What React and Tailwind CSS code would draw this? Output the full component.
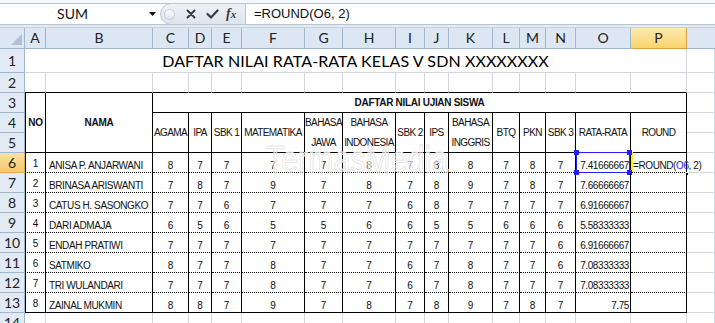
import React from 'react';

const letters = ['A', 'B', 'C', 'D', 'E', 'F', 'G', 'H', 'I', 'J', 'K', 'L', 'M', 'N', 'O', 'P'];

const siswa = [
  { no: 1, nama: 'ANISA P. ANJARWANI', nilai: [8, 7, 7, 7, 7, 8, 7, 8, 8, 7, 8, 7], rata: '7.41666667' },
  { no: 2, nama: 'BRINASA ARISWANTI', nilai: [7, 8, 7, 9, 7, 8, 7, 8, 9, 7, 8, 7], rata: '7.66666667' },
  { no: 3, nama: 'CATUS H. SASONGKO', nilai: [7, 7, 6, 7, 7, 7, 6, 8, 7, 7, 7, 7], rata: '6.91666667' },
  { no: 4, nama: 'DARI ADMAJA', nilai: [6, 5, 6, 5, 5, 6, 6, 5, 5, 6, 6, 6], rata: '5.58333333' },
  { no: 5, nama: 'ENDAH PRATIWI', nilai: [7, 7, 7, 7, 7, 7, 7, 7, 7, 7, 7, 6], rata: '6.91666667' },
  { no: 6, nama: 'SATMIKO', nilai: [8, 7, 7, 8, 7, 7, 6, 7, 8, 7, 7, 6], rata: '7.08333333' },
  { no: 7, nama: 'TRI WULANDARI', nilai: [7, 7, 7, 8, 7, 7, 6, 7, 8, 7, 7, 7], rata: '7.08333333' },
  { no: 8, nama: 'ZAINAL MUKMIN', nilai: [8, 8, 7, 9, 7, 8, 7, 8, 9, 7, 8, 7], rata: '7.75' },
];

// garis bantu excel & garis tabel
const GRID = 'border-r border-b border-[#d4d8de]';
const BOX = 'border-r border-b border-black';
const DOT = 'border-r border-b border-black [border-bottom-style:dotted]';
const HDR = 'text-center align-middle font-bold tracking-[-0.3px] whitespace-nowrap';
const SUB = 'text-center align-middle tracking-[-0.6px] whitespace-nowrap';

const RowHead = ({ n, active }) => (
  <td
    className={`border-r border-b text-center align-middle text-[14px] leading-none font-['Lato',sans-serif] ${
      active
        ? 'bg-gradient-to-b from-[#fbe2a6] to-[#f5c86a] border-[#e8a840] text-[#222]'
        : 'bg-[#e2eaf5] border-[#9eb6ce] text-[#222]'
    }`}
  >
    {n}
  </td>
);

const FormulaBar = () => (
  <div className="h-[28px] flex flex-col bg-[#e6ecf4]">
    <div className="h-[3px] bg-[#f7f8fa]" />
    <div className="h-[22px] flex border-y border-[#b8c3d1] bg-white">
      <div className="w-[160px] flex items-center relative">
        <span className="w-[145px] text-center text-[14px] font-['Lato',sans-serif] text-[#111]">SUM</span>
        <svg className="absolute left-[149px] top-[8px]" width="7" height="4" viewBox="0 0 7 4">
          <path d="M0 0 L7 0 L3.5 4 Z" fill="#111" />
        </svg>
      </div>
      <div className="w-[86px] flex items-center rounded-l-full border border-[#bcc7d5] bg-gradient-to-b from-[#eef2f7] to-[#dde4ee] -my-px">
        <div className="ml-[3px] w-[11px] h-[11px] rounded-full border border-[#c5ccd6] bg-gradient-to-b from-white to-[#dfe4ea]" />
        <svg className="ml-[11px]" width="10" height="10" viewBox="0 0 10 10">
          <path d="M1.5 1.5 L8.5 8.5 M8.5 1.5 L1.5 8.5" stroke="#3c3c3c" strokeWidth="2" strokeLinecap="round" />
        </svg>
        <svg className="ml-[10px]" width="13" height="10" viewBox="0 0 13 10">
          <path d="M1.5 5 L5 8.5 L11.5 1.5" stroke="#3c3c3c" strokeWidth="2.2" fill="none" strokeLinecap="round" strokeLinejoin="round" />
        </svg>
        <span className="ml-[7px] text-[14px] italic font-bold font-['Liberation_Serif',serif] text-[#3c3c3c] leading-none">
          f<span className="text-[11px]">x</span>
        </span>
      </div>
      <div className="flex-1 flex items-center pl-[8px] text-[13px] font-['Liberation_Sans',sans-serif] text-[#111]">
        =ROUND(O6, 2)
      </div>
    </div>
    <div className="flex-1 bg-[#e4eaf2] border-b border-[#c9d3df]" />
  </div>
);

export default function App() {
  return (
    <div className="w-[715px] h-[323px] overflow-hidden bg-white relative font-['Liberation_Sans',Arial,sans-serif] text-[10px] leading-[12px] text-[#111]">
      <FormulaBar />
      <table className="w-[715px] table-fixed border-separate border-spacing-0">
        <colgroup>
          <col className="w-[25px]" />
          <col className="w-[21px]" />
          <col className="w-[107px]" />
          <col className="w-[36px]" />
          <col className="w-[23px]" />
          <col className="w-[30px]" />
          <col className="w-[63px]" />
          <col className="w-[38px]" />
          <col className="w-[53px]" />
          <col className="w-[29px]" />
          <col className="w-[24px]" />
          <col className="w-[44px]" />
          <col className="w-[27px]" />
          <col className="w-[26px]" />
          <col className="w-[30px]" />
          <col className="w-[55px]" />
          <col className="w-[56px]" />
          <col className="w-[28px]" />
        </colgroup>
        <tbody>
          {/* huruf kolom */}
          <tr className="h-[21px]">
            <td className="border-r border-b border-[#9eb6ce] bg-[#dde7f3] relative">
              <svg className="absolute left-[11px] top-[6px]" width="11" height="11" viewBox="0 0 11 11">
                <path d="M11 0 L11 11 L0 11 Z" fill="#b5c0cc" />
              </svg>
            </td>
            {letters.map((l) => (
              <td
                key={l}
                className={`border-r border-b text-center align-middle text-[14px] leading-none font-['Lato',sans-serif] text-[#222] ${
                  l === 'P'
                    ? 'bg-gradient-to-b from-[#fdeab0] to-[#f9d46a] border-[#e0a040]'
                    : 'bg-[#dde7f3] border-[#9eb6ce]'
                }`}
              >
                {l}
              </td>
            ))}
            <td className="border-b border-[#9eb6ce] bg-[#dde7f3]" />
          </tr>

          {/* judul */}
          <tr className="h-[24px]">
            <RowHead n={1} />
            <td colSpan={16} className={`${GRID} text-center align-middle text-[16px] leading-none font-['Lato',sans-serif] tracking-[0.1px] text-black whitespace-nowrap`}>
              DAFTAR NILAI RATA-RATA KELAS V SDN XXXXXXXX
            </td>
            <td className={GRID} />
          </tr>

          <tr className="h-[20px]">
            <RowHead n={2} />
            {letters.map((l) => (
              <td key={l} className="border-r border-b border-r-[#d4d8de] border-b-black" />
            ))}
            <td className={GRID} />
          </tr>

          <tr className="h-[20px]">
            <RowHead n={3} />
            <td rowSpan={3} className={`${BOX} border-l ${HDR}`}>NO</td>
            <td rowSpan={3} className={`${BOX} ${HDR}`}>NAMA</td>
            <td colSpan={14} className={`${BOX} ${HDR}`}>DAFTAR NILAI UJIAN SISWA</td>
            <td className={GRID} />
          </tr>

          <tr className="h-[20px]">
            <RowHead n={4} />
            <td rowSpan={2} className={`${BOX} ${SUB}`}>AGAMA</td>
            <td rowSpan={2} className={`${BOX} ${SUB}`}>IPA</td>
            <td rowSpan={2} className={`${BOX} ${SUB}`}>SBK 1</td>
            <td rowSpan={2} className={`${BOX} ${SUB}`}>MATEMATIKA</td>
            <td className={`border-r border-black ${SUB}`}>BAHASA</td>
            <td className={`border-r border-black ${SUB}`}>BAHASA</td>
            <td rowSpan={2} className={`${BOX} ${SUB}`}>SBK 2</td>
            <td rowSpan={2} className={`${BOX} ${SUB}`}>IPS</td>
            <td className={`border-r border-black ${SUB}`}>BAHASA</td>
            <td rowSpan={2} className={`${BOX} ${SUB}`}>BTQ</td>
            <td rowSpan={2} className={`${BOX} ${SUB}`}>PKN</td>
            <td rowSpan={2} className={`${BOX} ${SUB}`}>SBK 3</td>
            <td rowSpan={2} className={`${BOX} ${SUB}`}>RATA-RATA</td>
            <td rowSpan={2} className={`${BOX} ${SUB}`}>ROUND</td>
            <td className={GRID} />
          </tr>

          <tr className="h-[20px]">
            <RowHead n={5} />
            <td className={`${BOX} ${SUB}`}>JAWA</td>
            <td className={`${BOX} ${SUB}`}>INDONESIA</td>
            <td className={`${BOX} ${SUB}`}>INGGRIS</td>
            <td className={GRID} />
          </tr>

          {siswa.map((s, i) => {
            const last = i === siswa.length - 1;
            const line = last ? BOX : DOT;
            return (
              <tr key={s.no} className="h-[20px]">
                <RowHead n={i + 6} active={i === 0} />
                <td className={`${line} border-l text-center align-bottom pb-[2px]`}>{s.no}</td>
                <td className={`${line} align-bottom pl-[3px] tracking-[-0.4px] whitespace-nowrap`}>{s.nama}</td>
                {s.nilai.map((v, j) => (
                  <td key={j} className={`${line} text-center align-bottom`}>{v}</td>
                ))}
                <td className={`${line} text-right align-bottom pr-[1px] tracking-[-0.4px] whitespace-nowrap relative`}>
                  {s.rata}
                  {i === 0 && (
                    <>
                      <div className="absolute left-0 right-0 top-[-1px] bottom-[-1px] border border-[#1f1fff]" />
                      <div className="absolute right-[-3px] top-[-1px] bottom-[-1px] w-[2px] bg-[#ffee00]" />
                      <div className="absolute left-[-2px] top-[-3px] w-[5px] h-[5px] bg-[#1f1fff]" />
                      <div className="absolute right-[-2px] top-[-3px] w-[5px] h-[5px] bg-[#1f1fff]" />
                      <div className="absolute left-[-2px] bottom-[-3px] w-[5px] h-[5px] bg-[#1f1fff]" />
                      <div className="absolute right-[-2px] bottom-[-3px] w-[5px] h-[5px] bg-[#1f1fff]" />
                    </>
                  )}
                </td>
                <td className={`${line} align-bottom pl-[2px] tracking-[-0.4px] whitespace-nowrap relative`}>
                  {i === 0 && (
                    <>
                      <span>
                        =ROUND(<span className="text-[#2020ff]">O6</span>, 2)
                      </span>
                      <div className="absolute right-[-3px] bottom-[-4px] w-[4px] h-[4px] bg-black border border-white" />
                    </>
                  )}
                </td>
                <td className={GRID} />
              </tr>
            );
          })}

          <tr className="h-[20px]">
            <RowHead n={14} />
            {letters.map((l) => (
              <td key={l} className={GRID} />
            ))}
            <td className={GRID} />
          </tr>
        </tbody>
      </table>

      {/* watermark */}
      <div className="absolute left-[266px] top-[141px] origin-left scale-x-[0.82] text-[37px] leading-none font-['Liberation_Sans',sans-serif] text-white/50 [-webkit-text-stroke:1px_#e6e6e6] whitespace-nowrap pointer-events-none">
        TermasMedia
      </div>
    </div>
  );
}
